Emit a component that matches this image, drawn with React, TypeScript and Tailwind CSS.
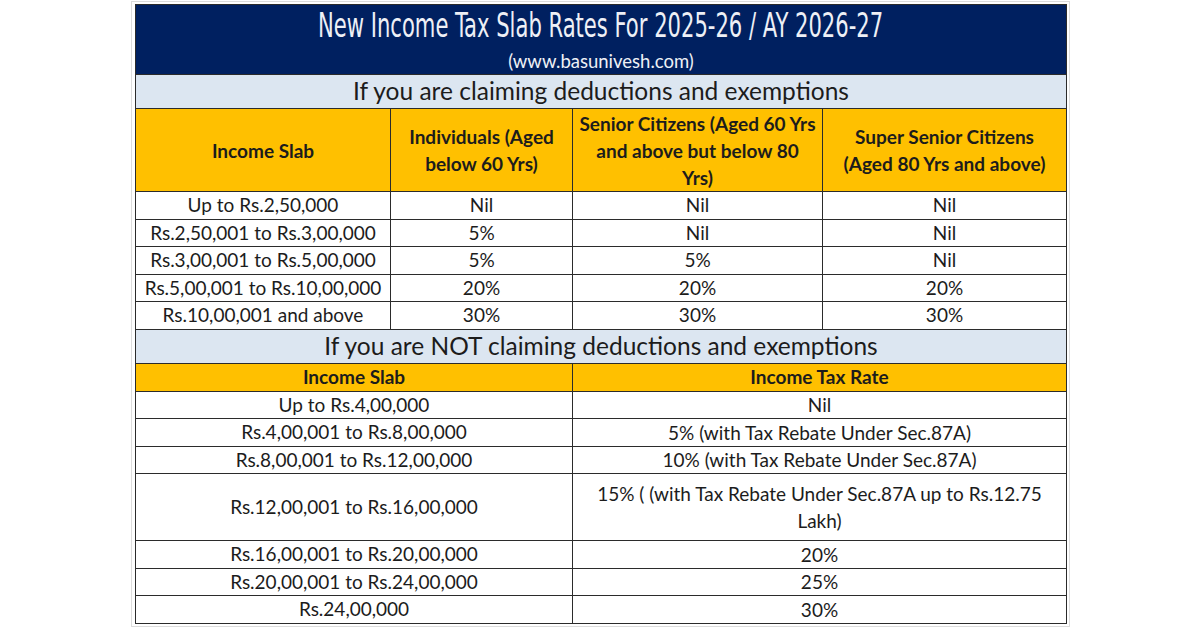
import React from 'react';

const body = { fontFamily: 'Lato, "Liberation Sans", sans-serif' };
const narrow = { fontFamily: '"Liberation Sans Narrow", "DejaVu Sans Condensed", sans-serif' };

const withDeductions = [
  ['Up to Rs.2,50,000', 'Nil', 'Nil', 'Nil'],
  ['Rs.2,50,001 to Rs.3,00,000', '5%', 'Nil', 'Nil'],
  ['Rs.3,00,001 to Rs.5,00,000', '5%', '5%', 'Nil'],
  ['Rs.5,00,001 to Rs.10,00,000', '20%', '20%', '20%'],
  ['Rs.10,00,001 and above', '30%', '30%', '30%'],
];

const withoutDeductions = [
  ['Up to Rs.4,00,000', 'Nil'],
  ['Rs.4,00,001 to Rs.8,00,000', '5% (with Tax Rebate Under Sec.87A)'],
  ['Rs.8,00,001 to Rs.12,00,000', '10% (with Tax Rebate Under Sec.87A)'],
  ['Rs.12,00,001 to Rs.16,00,000', 'SPLIT'],
  ['Rs.16,00,001 to Rs.20,00,000', '20%'],
  ['Rs.20,00,001 to Rs.24,00,000', '25%'],
  ['Rs.24,00,000', '30%'],
];

// cellule de base : bordure droite + bas, texte centré
const cell = 'flex items-center justify-center text-center border-r border-b border-[#2b2b2b]';

export default function App() {
  return (
    <div className="w-[1200px] h-[628px] bg-white text-[#1c1c1c] overflow-hidden" style={body}>
      <div className="ml-[131px] mt-[1px] w-[939px] h-[626px] border border-[#dcdcdc] pl-[3px] pt-[2px]">
        <div className="w-[932px] border-l border-t border-[#2b2b2b]">
          {/* Titre */}
          <div className={`${cell} h-[70px] bg-[#002060] text-[#eef0f6] flex-col`}>
            <div className="text-[34px] leading-[36px] -mt-[1px] whitespace-nowrap scale-x-[0.69]" style={narrow}>
              New Income Tax Slab Rates For 2025-26 / AY 2026-27
            </div>
            <div className="text-[18.5px] leading-[22px] mt-[7px]">(www.basunivesh.com)</div>
          </div>

          <div className={`${cell} h-[34px] bg-[#dce6f1] text-[24.5px]`}>
            If you are claiming deductions and exemptions
          </div>

          {/* En-tête jaune */}
          <div className="flex h-[83px] bg-[#ffc000] font-bold text-[19px] leading-[27px]">
            <div className={`${cell} w-[255px]`}>Income Slab</div>
            <div className={`${cell} w-[182px] px-1 whitespace-nowrap`}>Individuals (Aged<br />below 60 Yrs)</div>
            <div className={`${cell} w-[250px] px-1 whitespace-nowrap`}>Senior Citizens (Aged 60 Yrs<br />and above but below 80<br />Yrs)</div>
            <div className={`${cell} flex-1 px-1 whitespace-nowrap`}>Super Senior Citizens<br />(Aged 80 Yrs and above)</div>
          </div>

          {withDeductions.map((row, i) => (
            <div key={i} className="flex h-[27.5px] text-[19px]">
              <div className={`${cell} w-[255px]`}>{row[0]}</div>
              <div className={`${cell} w-[182px]`}>{row[1]}</div>
              <div className={`${cell} w-[250px]`}>{row[2]}</div>
              <div className={`${cell} flex-1`}>{row[3]}</div>
            </div>
          ))}

          <div className={`${cell} h-[34px] bg-[#dce6f1] text-[24.5px]`}>
            If you are NOT claiming deductions and exemptions
          </div>

          <div className="flex h-[28px] bg-[#ffc000] font-bold text-[19px]">
            <div className={`${cell} w-[437px]`}>Income Slab</div>
            <div className={`${cell} flex-1`}>Income Tax Rate</div>
          </div>

          {withoutDeductions.map((row, i) => (
            <div key={i} className={`flex text-[19px] ${row[1] === 'SPLIT' ? 'h-[67px]' : 'h-[27.5px]'}`}>
              <div className={`${cell} w-[437px]`}>{row[0]}</div>
              <div className={`${cell} flex-1 leading-[27px]`}>
                {row[1] === 'SPLIT' ? (
                  <span className="whitespace-nowrap">15% ( (with Tax Rebate Under Sec.87A up to Rs.12.75<br />Lakh)</span>
                ) : (
                  row[1]
                )}
              </div>
            </div>
          ))}
        </div>
      </div>
    </div>
  );
}
